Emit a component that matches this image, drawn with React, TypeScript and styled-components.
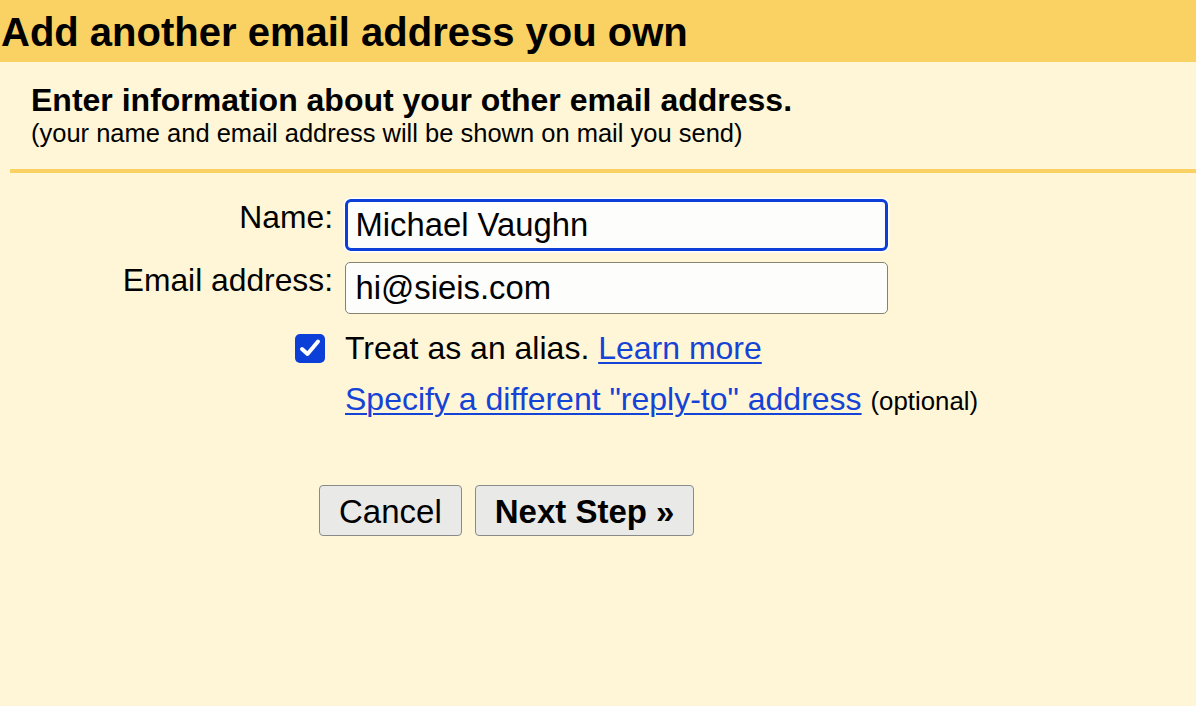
import React from "react";
import styled, { createGlobalStyle } from "styled-components";

const Global = createGlobalStyle`
  html, body {
    margin: 0;
    padding: 0;
    background: #fff6d7;
  }
  body {
    font-family: "Liberation Sans", Arial, Helvetica, sans-serif;
    color: #000;
  }
  * { box-sizing: border-box; }
`;

const Page = styled.div`
  width: 1196px;
  height: 706px;
  background: #fff6d7;
  overflow: hidden;
`;

const Header = styled.header`
  height: 62px;
  background: #fad163;
  padding-left: 1px;
  display: flex;
  align-items: center;
`;

const Title = styled.h1`
  margin: 0;
  font-size: 40px;
  line-height: 46px;
  font-weight: 700;
  padding-top: 2px;
`;

const Intro = styled.section`
  padding: 20px 0 0 31px;
`;

const Heading = styled.h2`
  margin: 0;
  font-size: 32px;
  line-height: 36px;
  font-weight: 700;
`;

const Note = styled.p`
  margin: 0;
  font-size: 25.5px;
  line-height: 31px;
`;

const Divider = styled.hr`
  margin: 20px 0 0 10px;
  border: 0;
  height: 4px;
  background: #fad163;
`;

const Form = styled.div`
  display: grid;
  grid-template-columns: 333px 543px;
  column-gap: 12px;
  row-gap: 11px;
  padding-top: 26px;
`;

const Label = styled.label`
  font-size: 31.8px;
  line-height: 36px;
  text-align: right;
  align-self: start;
  white-space: nowrap;
`;

const Input = styled.input<{ $focused?: boolean }>`
  height: 52px;
  width: 543px;
  font-family: inherit;
  font-size: 32.8px;
  color: #000;
  background: #fdfdfc;
  border-radius: ${(p) => (p.$focused ? 6 : 5)}px;
  border: ${(p) => (p.$focused ? "3.5px solid #0b3fd8" : "1.5px solid #878270")};
  padding: 0 0 0 ${(p) => (p.$focused ? 7.5 : 9.5)}px;
  outline: none;
  box-shadow: ${(p) => (p.$focused ? "0 0 0 1.5px #ffffff" : "none")};
`;

const CheckCell = styled.div<{ $pad?: number }>`
  display: flex;
  justify-content: flex-end;
  align-items: center;
  padding-right: 8px;
  margin-top: ${(p) => p.$pad ?? 0}px;
`;

const Box = styled.span`
  width: 30px;
  height: 29px;
  border-radius: 5px;
  background: #0b3fd8;
  display: flex;
  align-items: center;
  justify-content: center;
`;

const Line = styled.div<{ $pad?: number }>`
  font-size: 32px;
  line-height: 36px;
  margin-top: ${(p) => p.$pad ?? 0}px;
  white-space: nowrap;
`;

const Link = styled.a`
  color: #1443d6;
  text-decoration: underline;
  text-decoration-thickness: 2px;
  text-underline-offset: 3px;
  cursor: pointer;
`;

const Small = styled.span`
  font-size: 25.8px;
`;

const Buttons = styled.div`
  display: flex;
  gap: 13px;
  padding: 66px 0 0 319px;
`;

const Button = styled.button<{ $primary?: boolean }>`
  height: 51px;
  padding: 2px 19px 0;
  font-family: inherit;
  font-size: 33px;
  font-weight: ${(p) => (p.$primary ? 700 : 400)};
  color: #000;
  background: #e9e9e8;
  border: 1.5px solid #8a8a8a;
  border-radius: 4px;
`;

function CheckIcon() {
  return (
    <svg width="22" height="20" viewBox="0 0 22 20">
      <path
        d="M3 11 L8.5 16 L19 3.5"
        fill="none"
        stroke="#ffffff"
        strokeWidth="4"
        strokeLinecap="round"
        strokeLinejoin="round"
      />
    </svg>
  );
}

export default function App() {
  return (
    <Page>
      <Global />
      <Header>
        <Title>Add another email address you own</Title>
      </Header>
      <Intro>
        <Heading>Enter information about your other email address.</Heading>
        <Note>(your name and email address will be shown on mail you send)</Note>
      </Intro>
      <Divider />
      <Form>
        <Label htmlFor="name">Name:</Label>
        <Input id="name" $focused defaultValue="Michael Vaughn" />
        <Label htmlFor="email">Email address:</Label>
        <Input id="email" defaultValue="hi@sieis.com" />
        <CheckCell $pad={5}>
          <Box>
            <CheckIcon />
          </Box>
        </CheckCell>
        <Line $pad={5}>
          Treat as an alias. <Link>Learn more</Link>
        </Line>
        <span />
        <Line $pad={4}>
          <Link>Specify a different "reply-to" address</Link> <Small>(optional)</Small>
        </Line>
      </Form>
      <Buttons>
        <Button>Cancel</Button>
        <Button $primary>Next Step »</Button>
      </Buttons>
    </Page>
  );
}
